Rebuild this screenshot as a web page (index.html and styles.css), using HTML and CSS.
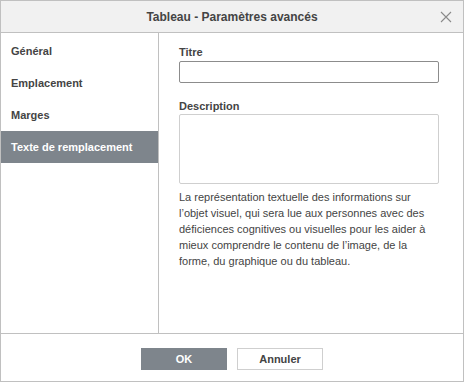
FILE: index.html
```html
<!DOCTYPE html>
<html lang="fr">
<head>
<meta charset="utf-8">
<link rel="stylesheet" href="styles.css">
</head>
<body>
<div class="dialog">
  <div class="header">
    <span class="title">Tableau - Paramètres avancés</span>
    <svg class="close" width="12" height="12" viewBox="0 0 12 12"><path d="M1 1 L11 11 M11 1 L1 11" stroke="#8a8a8a" stroke-width="1.1" fill="none"/></svg>
  </div>
  <div class="main">
    <div class="sidebar">
      <div class="item">Général</div>
      <div class="item">Emplacement</div>
      <div class="item">Marges</div>
      <div class="item active">Texte de remplacement</div>
    </div>
    <div class="content">
      <div class="label">Titre</div>
      <div class="input"></div>
      <div class="label label-desc">Description</div>
      <div class="textarea"></div>
      <p class="note">La représentation textuelle des informations sur l’objet visuel, qui sera lue aux personnes avec des déficiences cognitives ou visuelles pour les aider à mieux comprendre le contenu de l’image, de la forme, du graphique ou du tableau.</p>
    </div>
  </div>
  <div class="footer">
    <div class="btn primary">OK</div>
    <div class="btn">Annuler</div>
  </div>
</div>
</body>
</html>
```

FILE: styles.css
```css
html, body {
  margin: 0;
  padding: 0;
  background: #ffffff;
}
body {
  font-family: "Liberation Sans", Arial, sans-serif;
  font-size: 11px;
  color: #444444;
}
.dialog {
  width: 462px;
  height: 380px;
  border: 1px solid #c0c0c0;
  display: flex;
  flex-direction: column;
  background: #ffffff;
}
.header {
  height: 31px;
  background: #f1f1f1;
  border-bottom: 1px solid #c0c0c0;
  display: flex;
  align-items: center;
  justify-content: center;
  position: relative;
}
.title {
  font-size: 12px;
  font-weight: bold;
  color: #444444;
}
.close {
  position: absolute;
  left: 439px;
  top: 10px;
}
.main {
  height: 300px;
  display: flex;
}
.sidebar {
  width: 157px;
  border-right: 1px solid #c0c0c0;
  padding-top: 2px;
  box-sizing: content-box;
}
.item {
  height: 32px;
  line-height: 32px;
  padding-left: 10px;
  font-weight: bold;
  color: #444444;
  white-space: nowrap;
}
.item.active {
  background: #7e858c;
  color: #ffffff;
}
.content {
  flex: 1;
  padding: 12px 0 0 20px;
}
.label {
  line-height: 14px;
  font-weight: bold;
  color: #444444;
  margin-bottom: 2px;
}
.label-desc {
  margin-top: 16px;
  margin-bottom: 1px;
}
.input {
  width: 258px;
  height: 20px;
  border: 1px solid #8c8c8c;
  border-radius: 2px;
}
.textarea {
  width: 258px;
  height: 68px;
  border: 1px solid #cfcfcf;
  border-radius: 2px;
}
.note {
  width: 262px;
  margin: 5px 0 0 0;
  line-height: 16px;
  color: #444444;
}
.footer {
  flex: 1;
  border-top: 1px solid #c0c0c0;
  display: flex;
  justify-content: center;
  align-items: flex-start;
  gap: 10px;
  padding-top: 14px;
}
.btn {
  width: 84px;
  height: 20px;
  line-height: 20px;
  text-align: center;
  font-weight: bold;
  border: 1px solid #cfcfcf;
  background: #ffffff;
  color: #444444;
}
.btn.primary {
  background: #7e858c;
  border-color: #7e858c;
  color: #ffffff;
}
```
